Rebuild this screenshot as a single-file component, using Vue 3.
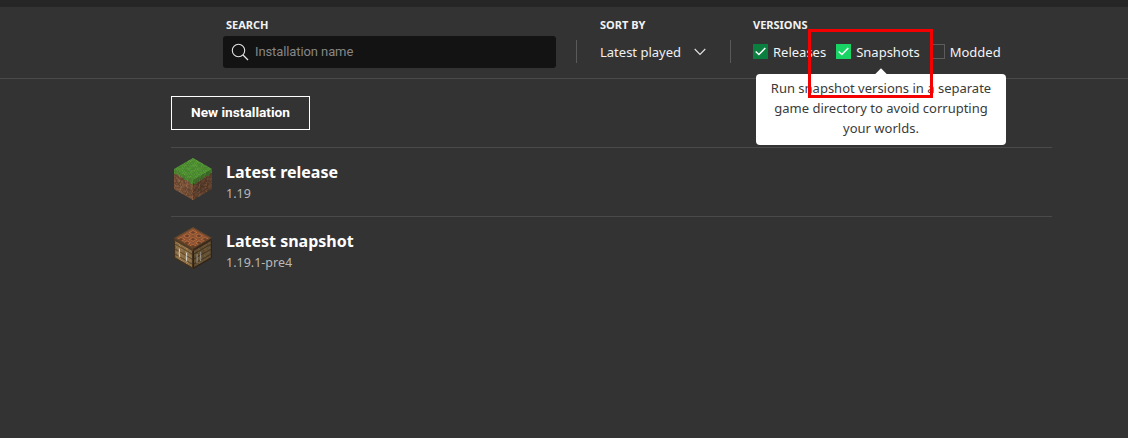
<template>
  <div class="page">
    <div class="topbar"></div>

    <!-- Filters -->
    <header class="filters">
      <div class="filter filter--search">
        <label class="filter-label">SEARCH</label>
        <div class="search-box">
          <svg class="search-icon" width="18" height="18" viewBox="0 0 18 18" fill="none" stroke="#e4e4e4">
            <circle cx="7.5" cy="7.5" r="6.2" stroke-width="1.1" />
            <path d="M12 12l5 5" stroke-width="1.2" />
          </svg>
          <span class="search-placeholder">Installation name</span>
        </div>
      </div>

      <span class="divider"></span>

      <div class="filter filter--sort">
        <label class="filter-label">SORT BY</label>
        <div class="sort-select">
          <span>Latest played</span>
          <svg width="12" height="8" viewBox="0 0 12 8" fill="none" stroke="#e4e4e4" stroke-width="1.1">
            <path d="M.7 1l5.3 5.5L11.3 1" />
          </svg>
        </div>
      </div>

      <span class="divider divider--second"></span>

      <div class="filter">
        <label class="filter-label">VERSIONS</label>
        <div class="checks">
          <div v-for="c in checks" :key="c.name" class="check" :class="c.cls">
            <span class="check-box">
              <svg v-if="c.cls !== 'check--off'" width="11" height="9" viewBox="0 0 11 9" fill="none" stroke="#fff" stroke-width="1.5">
                <path d="M.7 4.5l3.2 3L10.3 1" />
              </svg>
            </span>
            <span class="check-label">{{ c.name }}</span>
          </div>
        </div>
      </div>
    </header>

    <!-- Installations -->
    <main class="content">
      <button class="btn-new">New installation</button>
      <div class="install-list">
        <div v-for="item in installs" :key="item.name" class="install">
          <svg class="block" width="38" height="42" viewBox="0 0 38 42">
            <g transform="matrix(1.1875 .6875 -1.1875 .6875 19 0)">
              <rect v-for="p in item.top" :key="p.k" :x="p.x" :y="p.y" width="1.05" height="1.05" :fill="p.c" />
            </g>
            <g transform="matrix(1.1875 .6875 0 1.25 0 11)">
              <rect v-for="p in item.left" :key="p.k" :x="p.x" :y="p.y" width="1.05" height="1.05" :fill="p.c" />
            </g>
            <g transform="matrix(1.1875 -.6875 0 1.25 19 22)">
              <rect v-for="p in item.right" :key="p.k" :x="p.x" :y="p.y" width="1.05" height="1.05" :fill="p.c" />
            </g>
          </svg>
          <div class="install-text">
            <p class="install-name">{{ item.name }}</p>
            <p class="install-version">{{ item.version }}</p>
          </div>
        </div>
      </div>
    </main>

    <!-- Tooltip over the filters -->
    <div class="tooltip">
      <span class="tooltip-arrow"></span>
      Run snapshot versions in a separate<br />
      game directory to avoid corrupting<br />
      your worlds.
    </div>

    <!-- Red annotation drawn on the screenshot -->
    <div class="annotation"></div>
  </div>
</template>

<script setup>
const checks = [
  { name: 'Releases', cls: 'check--dark' },
  { name: 'Snapshots', cls: 'check--bright' },
  { name: 'Modded', cls: 'check--off' },
]

// small repeatable noise, the blocks are 16x16 textures
const noise = (x, y, s) => {
  const n = Math.sin(x * 12.9898 + y * 78.233 + s) * 43758.5453
  return n - Math.floor(n)
}

const pick = (list, x, y, s) => list[Math.floor(noise(x, y, s) * list.length)]

const face = (fn) => {
  const out = []
  for (let y = 0; y < 16; y++) {
    for (let x = 0; x < 16; x++) {
      out.push({ k: x + '-' + y, x, y, c: fn(x, y) })
    }
  }
  return out
}

const grassTop = ['#5aa636', '#52a032', '#62ad3b', '#4f9a30']
const dirtL = ['#8f5f3e', '#7f5236', '#70482f', '#9a6a47']
const dirtR = ['#6f4830', '#5f3d29', '#533524', '#7a5238']
const sideGrassL = ['#5c9c35', '#4f9030']
const sideGrassR = ['#47802b', '#3e7426']

const tableTop = (x, y) => {
  if (x < 1 || y < 1 || x > 14 || y > 14) return '#6e4c2a'
  if ((x - 1) % 5 === 0 || (y - 1) % 5 === 0) return '#a05a34'
  const cx = (x - 2) % 5 === 1 || (x - 2) % 5 === 2
  const cy = (y - 2) % 5 === 1 || (y - 2) % 5 === 2
  return cx && cy ? '#7d4428' : '#c0703f'
}

const tableSide = (dark) => (x, y) => {
  const tone = dark ? 0.68 : 1
  const shade = (r, g, b) => `rgb(${r * tone | 0},${g * tone | 0},${b * tone | 0})`
  if (y < 2) return shade(92, 62, 36)
  if (y === 15 || x === 0 || x === 15) return shade(70, 50, 28)
  if (!dark && (x === 4 || x === 10) && y > 5 && y < 13) return '#ded8ca'
  if (dark && (x === 3 || x === 6) && y > 5 && y < 13) return '#a8a294'
  if (y % 4 === 0) return shade(112, 84, 48)
  return noise(x, y, 5) > 0.5 ? shade(176, 140, 86) : shade(158, 122, 72)
}

const installs = [
  {
    name: 'Latest release',
    version: '1.19',
    top: face((x, y) => pick(grassTop, x, y, 1)),
    left: face((x, y) => (y < 2 + noise(x, 0, 2) * 2 ? pick(sideGrassL, x, y, 4) : pick(dirtL, x, y, 2))),
    right: face((x, y) => (y < 2 + noise(x, 0, 6) * 2 ? pick(sideGrassR, x, y, 7) : pick(dirtR, x, y, 8))),
  },
  {
    name: 'Latest snapshot',
    version: '1.19.1-pre4',
    top: face(tableTop),
    left: face(tableSide(false)),
    right: face(tableSide(true)),
  },
]
</script>

<style>
html,
body {
  margin: 0;
  background: #333333;
}
</style>

<style scoped>
.page {
  position: relative;
  width: 1128px;
  height: 438px;
  overflow: hidden;
  background: #333333;
  color: #fff;
  font-family: 'Noto Sans', sans-serif;
}

.topbar {
  height: 7px;
  background: #262626;
}

/* Filters */
.filters {
  display: flex;
  align-items: flex-start;
  height: 72px;
  box-sizing: border-box;
  padding: 11px 0 0 223px;
  border-bottom: 1px solid #4a4a4a;
}

.filter {
  display: flex;
  flex-direction: column;
}

.filter--search {
  width: 333px;
}

.filter--search .filter-label {
  padding-left: 3px;
}

.filter--sort {
  width: 130px;
}

.filter-label {
  height: 18px;
  font-size: 11px;
  line-height: 14px;
  font-weight: 700;
  color: #f2f2f2;
}

.search-box {
  display: flex;
  align-items: center;
  height: 32px;
  background: #131313;
  border-radius: 3px;
  padding-left: 8px;
}

.search-icon {
  flex-shrink: 0;
}

.search-placeholder {
  margin: 0 0 2px 6px;
  font-family: Roboto, sans-serif;
  font-size: 13px;
  letter-spacing: -0.1px;
  color: #868686;
}

.divider {
  width: 1px;
  height: 23px;
  margin: 22px 23px 0 20px;
  background: #5a5a5a;
}

.divider--second {
  margin-left: 0;
  margin-right: 22px;
}

.sort-select {
  display: flex;
  align-items: center;
  gap: 13px;
  height: 32px;
  font-size: 13px;
  color: #f0f0f0;
}

.checks {
  display: flex;
  align-items: center;
  height: 31px;
}

.check {
  display: flex;
  align-items: center;
  gap: 5px;
  margin-right: 10px;
  font-size: 13px;
  color: #f4f4f4;
}

.check-box {
  display: flex;
  align-items: center;
  justify-content: center;
  width: 15px;
  height: 15px;
  box-sizing: border-box;
}

.check--dark .check-box {
  background: #0b7f3f;
}

.check--bright .check-box {
  background: #17d465;
}

.check--off .check-box {
  border: 1px solid #5c5c5c;
}

/* Installations */
.content {
  padding: 17px 76px 0 171px;
}

.btn-new {
  display: block;
  width: 139px;
  height: 34px;
  padding: 0 0 2px;
  background: transparent;
  border: 1px solid #fff;
  color: #fff;
  font-family: Roboto, sans-serif;
  font-size: 13.7px;
  font-weight: 700;
}

.install-list {
  margin-top: 17px;
}

.install {
  display: flex;
  align-items: center;
  height: 69px;
  box-sizing: border-box;
  border-top: 1px solid #4a4a4a;
  padding-left: 3px;
}

.block {
  flex-shrink: 0;
  filter: blur(0.5px);
  margin-bottom: 6px;
}

.install-text {
  margin-left: 14px;
  margin-bottom: 2px;
}

.install-name {
  margin: 0;
  font-size: 16px;
  line-height: 22px;
  font-weight: 700;
}

.install-version {
  margin: 2px 0 0;
  font-size: 12.5px;
  line-height: 17px;
  color: #b8b8b8;
}

/* Tooltip */
.tooltip {
  position: absolute;
  left: 756px;
  top: 74px;
  width: 250px;
  height: 71px;
  box-sizing: border-box;
  padding-top: 4px;
  background: #fff;
  border-radius: 4px;
  color: #3a3a3a;
  font-size: 13px;
  line-height: 20px;
  text-align: center;
}

.tooltip-arrow {
  position: absolute;
  left: 121px;
  top: -4px;
  width: 8px;
  height: 8px;
  background: #fff;
  transform: rotate(45deg);
}

.annotation {
  position: absolute;
  left: 808px;
  top: 29px;
  width: 125px;
  height: 69px;
  box-sizing: border-box;
  border: 3px solid #f50000;
}
</style>
